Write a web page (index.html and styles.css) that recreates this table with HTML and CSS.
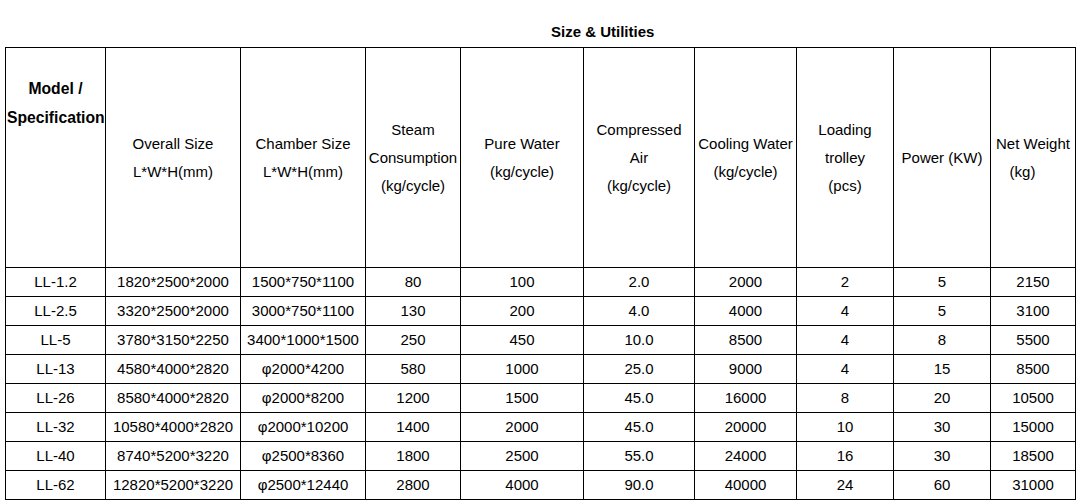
FILE: index.html
```html
<!DOCTYPE html>
<html>
<head>
<meta charset="utf-8">
<link rel="stylesheet" href="styles.css">
</head>
<body>
<div class="page">
  <div class="title">Size &amp; Utilities</div>
  <table class="spec">
    <colgroup>
      <col class="c1"><col class="c2"><col class="c3"><col class="c4"><col class="c5">
      <col class="c6"><col class="c7"><col class="c8"><col class="c9"><col class="c10">
    </colgroup>
    <thead>
      <tr class="head">
        <th class="model">Model /<br>Specification</th>
        <th>Overall Size<br>L*W*H(mm)</th>
        <th>Chamber Size<br>L*W*H(mm)</th>
        <th>Steam<br>Consumption<br>(kg/cycle)</th>
        <th>Pure Water<br>(kg/cycle)</th>
        <th>Compressed<br>Air<br>(kg/cycle)</th>
        <th>Cooling Water<br>(kg/cycle)</th>
        <th>Loading<br>trolley<br>(pcs)</th>
        <th>Power (KW)</th>
        <th>Net Weight<br><span class="kg">(kg)</span></th>
      </tr>
    </thead>
    <tbody>
      <tr><td>LL-1.2</td><td>1820*2500*2000</td><td>1500*750*1100</td><td>80</td><td>100</td><td>2.0</td><td>2000</td><td>2</td><td>5</td><td>2150</td></tr>
      <tr><td>LL-2.5</td><td>3320*2500*2000</td><td>3000*750*1100</td><td>130</td><td>200</td><td>4.0</td><td>4000</td><td>4</td><td>5</td><td>3100</td></tr>
      <tr><td>LL-5</td><td>3780*3150*2250</td><td>3400*1000*1500</td><td>250</td><td>450</td><td>10.0</td><td>8500</td><td>4</td><td>8</td><td>5500</td></tr>
      <tr><td>LL-13</td><td>4580*4000*2820</td><td>φ2000*4200</td><td>580</td><td>1000</td><td>25.0</td><td>9000</td><td>4</td><td>15</td><td>8500</td></tr>
      <tr><td>LL-26</td><td>8580*4000*2820</td><td>φ2000*8200</td><td>1200</td><td>1500</td><td>45.0</td><td>16000</td><td>8</td><td>20</td><td>10500</td></tr>
      <tr><td>LL-32</td><td>10580*4000*2820</td><td>φ2000*10200</td><td>1400</td><td>2000</td><td>45.0</td><td>20000</td><td>10</td><td>30</td><td>15000</td></tr>
      <tr><td>LL-40</td><td>8740*5200*3220</td><td>φ2500*8360</td><td>1800</td><td>2500</td><td>55.0</td><td>24000</td><td>16</td><td>30</td><td>18500</td></tr>
      <tr><td>LL-62</td><td>12820*5200*3220</td><td>φ2500*12440</td><td>2800</td><td>4000</td><td>90.0</td><td>40000</td><td>24</td><td>60</td><td>31000</td></tr>
    </tbody>
  </table>
</div>
</body>
</html>
```

FILE: styles.css
```css
html, body {
  margin: 0;
  padding: 0;
  background: #fff;
}

body {
  font-family: "Liberation Sans", Arial, sans-serif;
  font-size: 15px;
  color: #000;
}

.page {
  padding: 22px 0 0 5px;
}

.title {
  font-weight: bold;
  line-height: 20px;
  height: 20px;
  margin: 0 0 5px 546px;
}

.spec {
  border-collapse: collapse;
  table-layout: fixed;
  width: 1070px;
}

.c1 { width: 100px; }
.c2 { width: 135px; }
.c3 { width: 125px; }
.c4 { width: 95px; }
.c5 { width: 123px; }
.c6 { width: 111px; }
.c7 { width: 102px; }
.c8 { width: 97px; }
.c9 { width: 97px; }
.c10 { width: 85px; }

.spec th,
.spec td {
  border: 1px solid #000;
  padding: 0 1px;
  text-align: center;
  vertical-align: middle;
  white-space: nowrap;
}

.spec th {
  font-weight: normal;
  line-height: 28px;
}

.head {
  height: 220px;
}

.spec th.model {
  font-size: 15.7px;
  font-weight: bold;
  vertical-align: top;
  line-height: 29px;
  padding-top: 26px;
}

.kg {
  display: inline-block;
  padding-right: 21px;
}

.spec td {
  height: 28px;
  line-height: 20px;
}
```
